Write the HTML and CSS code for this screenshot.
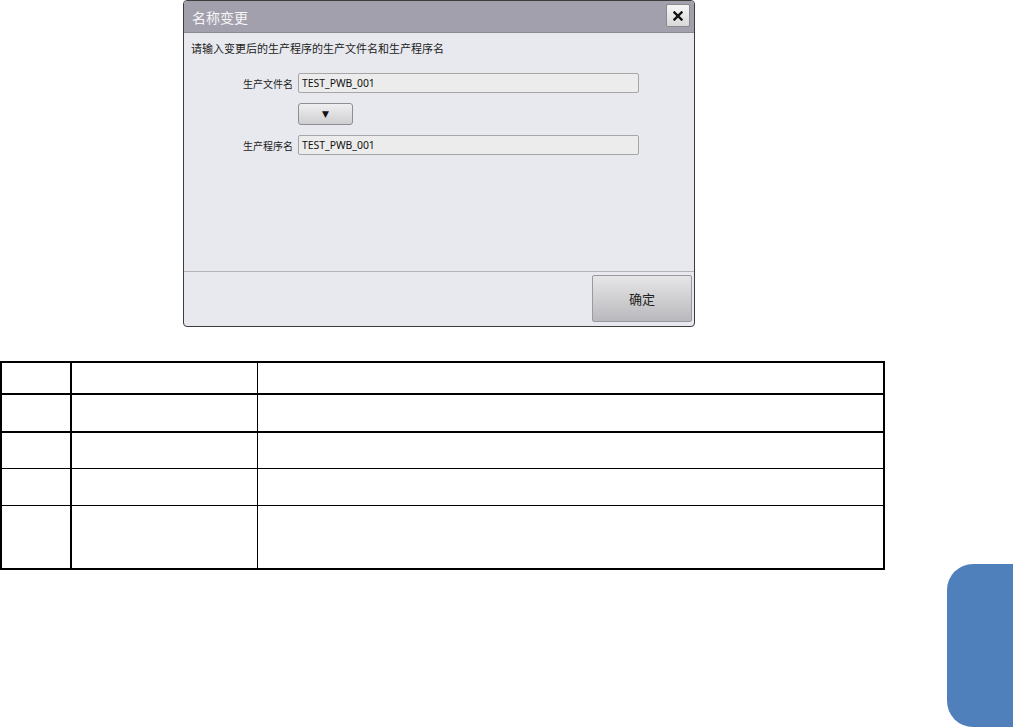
FILE: index.html
```html
<!DOCTYPE html>
<html lang="zh-CN">
<head>
    <meta charset="UTF-8">
    <title>名称变更</title>
    <link rel="stylesheet" href="styles.css">
</head>
<body>

<div class="page">
    <!-- rename dialog -->
    <div class="dialog">
        <div class="dialog-title">
            <span class="title-text">名称变更</span>
            <button class="close-btn">
                <svg width="10" height="10" viewBox="0 0 10 10">
                    <path d="M1.5 1.5 L8.5 8.5 M8.5 1.5 L1.5 8.5" stroke="#111" stroke-width="2.4" stroke-linecap="square"/>
                </svg>
            </button>
        </div>
        <div class="dialog-body">
            <p class="hint">请输入变更后的生产程序的生产文件名和生产程序名</p>
            <div class="field-row">
                <label class="field-label">生产文件名</label>
                <div class="field-input">TEST_PWB_001</div>
            </div>
            <div class="field-row copy-row">
                <span class="field-label"></span>
                <button class="copy-btn">&#9660;</button>
            </div>
            <div class="field-row">
                <label class="field-label">生产程序名</label>
                <div class="field-input">TEST_PWB_001</div>
            </div>
        </div>
        <div class="dialog-footer">
            <button class="ok-btn">确定</button>
        </div>
    </div>

    <!-- description table (empty cells) -->
    <div class="spec-table">
        <div class="spec-row row-head"><div></div><div></div><div></div></div>
        <div class="spec-row row-2"><div></div><div></div><div></div></div>
        <div class="spec-row row-3"><div></div><div></div><div></div></div>
        <div class="spec-row row-4"><div></div><div></div><div></div></div>
        <div class="spec-row row-5"><div></div><div></div><div></div></div>
    </div>
</div>

<div class="side-tab"></div>

</body>
</html>
```

FILE: styles.css
```css
* {
    box-sizing: border-box;
}
body {
    margin: 0;
    background: #fff;
    font-family: "Noto Sans", "Noto Sans CJK SC", sans-serif;
    color: #222;
    width: 1013px;
    height: 727px;
    overflow: hidden;
    position: relative;
}
.page {
    padding: 0;
}

/* dialog */
.dialog {
    margin-left: 183px;
    width: 512px;
    height: 327px;
    border: 1px solid #3c3c3c;
    border-radius: 4px;
    background: #e8e9ee;
    display: flex;
    flex-direction: column;
    overflow: hidden;
}
.dialog-title {
    height: 32px;
    background: #a2a0ac;
    border-bottom: 1px solid #8c8a96;
    display: flex;
    align-items: center;
    justify-content: space-between;
    padding: 0 4px 0 8px;
}
.title-text {
    color: #f6f6f8;
    font-size: 14px;
    font-family: "Noto Sans CJK SC", sans-serif;
    margin-top: 1px;
}
.close-btn {
    width: 24px;
    height: 23px;
    margin-top: -2px;
    padding: 0;
    border: 1px solid #8a8a8a;
    border-radius: 2px;
    background: linear-gradient(#f6f6f6, #d8d8da);
    display: flex;
    align-items: center;
    justify-content: center;
}
.dialog-body {
    flex: 1;
    padding: 8px 7px 0;
}
.hint {
    margin: 0 0 18px;
    font-size: 11px;
    line-height: 14px;
    font-family: "Noto Sans CJK SC", sans-serif;
    color: #222;
}
.field-row {
    display: flex;
    align-items: center;
    gap: 5px;
    height: 20px;
}
.field-label {
    width: 102px;
    text-align: right;
    font-size: 10px;
    font-family: "Noto Sans CJK SC", sans-serif;
    color: #222;
}
.field-input {
    width: 341px;
    height: 20px;
    border: 1px solid #a6a6a6;
    border-radius: 2px;
    background: #ececec;
    font-size: 10.4px;
    line-height: 18px;
    padding-left: 3px;
    color: #111;
}
.copy-row {
    height: 22px;
    margin: 10px 0;
}
.copy-btn {
    width: 55px;
    height: 22px;
    padding: 0;
    border: 1px solid #8e8e8e;
    border-radius: 3px;
    background: linear-gradient(#efeff0, #cfcfd2);
    color: #111;
    font-size: 9px;
    line-height: 20px;
    font-family: "DejaVu Sans", sans-serif;
}
.dialog-footer {
    height: 55px;
    border-top: 1px solid #b3b3b8;
    display: flex;
    justify-content: flex-end;
    padding: 3px 2px 0 0;
}
.ok-btn {
    width: 100px;
    height: 47px;
    border: 1px solid #9a9a9e;
    border-radius: 2px;
    background: linear-gradient(#e6e6e8, #b9b9bd);
    font-size: 13px;
    font-family: "Noto Sans CJK SC", sans-serif;
    color: #222;
}

/* table */
.spec-table {
    margin-top: 34px;
    width: 885px;
    border: 2px solid #000;
    border-bottom: 0;
}
.spec-row {
    display: grid;
    grid-template-columns: 70px 186px 1fr;
    border-bottom: 2px solid #000;
}
.spec-row > div:nth-child(1) {
    border-right: 2px solid #000;
}
.spec-row > div:nth-child(2) {
    border-right: 1px solid #000;
}
.row-head { height: 32px; }
.row-2 { height: 38px; }
.row-3 { height: 36px; border-bottom-width: 1px; }
.row-4 { height: 37px; border-bottom-width: 1px; }
.row-5 { height: 64px; }

/* chapter tab at page edge */
.side-tab {
    position: absolute;
    left: 947px;
    top: 564px;
    width: 66px;
    height: 163px;
    background: #4f80bc;
    border-radius: 26px 0 0 26px;
}
```
